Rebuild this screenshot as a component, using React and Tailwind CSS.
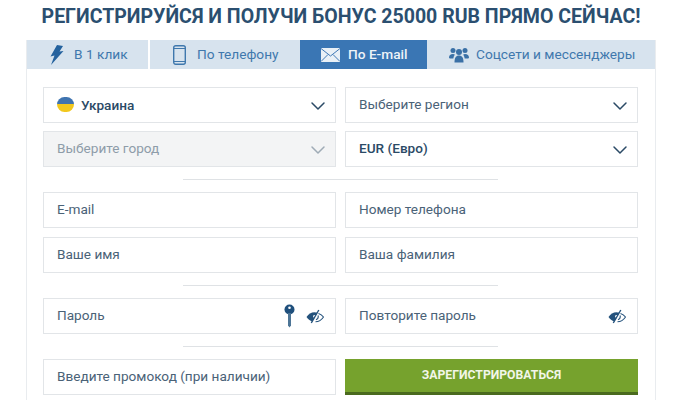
import React from "react";
import { ChevronDown } from "lucide-react";

const font = "font-['Roboto',sans-serif]";

function Chevron({ muted }) {
  return <ChevronDown className={muted ? "w-6 h-6 -mr-[5px] mt-[2px] text-[#9fabb6]" : "w-6 h-6 -mr-[5px] mt-[2px] text-[#2b4a66]"} strokeWidth={1.5} />;
}

function EyeOff() {
  return (
    <svg width="18" height="15" viewBox="0 0 18 15" className="block">
      <path d="M0.500 8C2.500 5 5.200 3.200 8.500 3.200c1 0 2 .2 2.900.5L6.200 12.600C3.900 11.800 2 10.200 0.500 8Z" fill="#24527c" />
      <circle cx="8.500" cy="7.500" r="1.400" fill="#fff" />
      <path d="M5.300 14 12.800 1" stroke="#24527c" strokeWidth="1.400" fill="none" />
      <path d="M12.500 4.500C14.500 5.200 16.200 6.400 17.500 8 15.500 11 12.800 12.800 9.500 12.800M12 6.500C12.700 8.500 11.800 10 10 10.800" stroke="#24527c" strokeWidth="1.100" fill="none" />
    </svg>
  );
}

function Key() {
  return (
    <svg width="11" height="24" viewBox="0 0 11 24" className="block">
      <circle cx="5.500" cy="5.500" r="5" fill="#1f4f7c" />
      <circle cx="5.500" cy="3.800" r="1.300" fill="#fff" />
      <path d="M4 9h3v12.500L5.500 23.500 4 21.500Z" fill="#4d7596" />
    </svg>
  );
}

function Bolt() {
  return (
    <svg width="15" height="20" viewBox="0 0 15 20" className="block">
      <path d="M8 0 14 1 10.500 6.500 14.500 6 2 20 5.500 10.500 1.500 11.500Z" fill="#24629e" />
    </svg>
  );
}

function Phone() {
  return (
    <svg width="13" height="20" viewBox="0 0 13 20" className="block" fill="none">
      <rect x="0.700" y="0.700" width="11.600" height="18.600" rx="2" stroke="#3f78ad" strokeWidth="1.400" />
      <path d="M1 3.500h11M1 16.500h11" stroke="#3f78ad" strokeWidth="1" />
    </svg>
  );
}

function Mail() {
  return (
    <svg width="19" height="14" viewBox="0 0 19 14" className="block" fill="none">
      <rect width="19" height="14" fill="#e9f0f6" />
      <path d="M0 0.500 9.500 8 19 0.500M0 13.500 7 6.500M19 13.500 12 6.500" stroke="#3f78b5" strokeWidth="1" />
    </svg>
  );
}

function Users() {
  return (
    <svg width="20" height="16" viewBox="0 0 20 16" className="block" fill="#3a70a6">
      <circle cx="4" cy="3.500" r="2.500" />
      <circle cx="16" cy="3.500" r="2.500" />
      <circle cx="10" cy="5" r="3" />
      <path d="M0 11c0-3 1.500-4 4-4 .8 0 1.400.2 1.800.5C5 8.700 4.500 10 4.300 11.500H1Z" />
      <path d="M20 11c0-3-1.500-4-4-4-.8 0-1.400.2-1.800.5.800 1.200 1.300 2.500 1.500 4H19Z" />
      <path d="M5.500 15.500c0-5 1.500-7 4.500-7s4.500 2 4.500 7Z" />
    </svg>
  );
}

function Flag() {
  return (
    <span className="block w-[17px] h-[15px] rounded-full overflow-hidden shrink-0">
      <span className="block h-1/2 bg-[#3f74b0]" />
      <span className="block h-1/2 bg-[#f2c81e]" />
    </span>
  );
}

function Tab({ children, className }) {
  return <div className={`h-[29px] flex items-center text-[13.700px] ${className}`}>{children}</div>;
}

function Field({ children, right, className = "", textClass = "text-[#4a6277]" }) {
  return (
    <div className={`h-9 border border-[#e2e5e8] flex items-center justify-between pl-[13px] pr-[10px] text-[13.600px] ${textClass} ${className}`}>
      <span className="flex items-center gap-[7px] -mt-px">{children}</span>
      {right}
    </div>
  );
}

function Divider() {
  return <div className="w-[315px] h-px bg-[#dfe2e5] mx-auto" />;
}

export default function App() {
  return (
    <div className={`w-[680px] h-[400px] overflow-hidden bg-white ${font}`}>
      <h1 className="h-10 flex items-center justify-center pl-[2px] text-[19.550px] font-bold text-[#2b4f70] whitespace-nowrap -mt-[3px] leading-none">
        РЕГИСТРИРУЙСЯ И ПОЛУЧИ БОНУС 25000 RUB ПРЯМО СЕЙЧАС!
      </h1>
      <div className="ml-[26px] mt-[3px] w-[630px] h-[400px] border-x border-[#e9ecef]">
        <div className="flex text-[#3f78ad]">
          <Tab className="w-[121px] bg-[#d7e3ee] pl-[22px] gap-[10px]"><Bolt /><span>В 1 клик</span></Tab>
          <Tab className="w-[150px] ml-[2px] bg-[#d7e3ee] pl-[23px] gap-[11px]"><Phone /><span>По телефону</span></Tab>
          <Tab className="w-[127px] bg-[#3a76b4] text-[#eef3f8] font-medium pl-[21px] gap-[8px]"><Mail /><span>По E-mail</span></Tab>
          <Tab className="w-[228px] bg-[#d7e3ee] pl-[22px] gap-[7px]"><Users /><span>Соцсети и мессенджеры</span></Tab>
        </div>
        <div className="pl-4 pr-[17px] pt-[18px]">
          <div className="grid grid-cols-2 gap-x-[9px] gap-y-2">
            <Field right={<Chevron />} textClass="text-[#2b4a66] font-medium"><Flag /><span className="mt-px">Украина</span></Field>
            <Field right={<Chevron />}>Выберите регион</Field>
            <Field right={<Chevron muted />} className="bg-[#f3f4f5]" textClass="text-[#8e9ca9]">Выберите город</Field>
            <Field right={<Chevron />} textClass="text-[#2b4a66] font-medium">EUR (Евро)</Field>
          </div>
          <div className="py-3"><Divider /></div>
          <div className="grid grid-cols-2 gap-x-[9px] gap-y-[9px]">
            <Field>E-mail</Field>
            <Field>Номер телефона</Field>
            <Field>Ваше имя</Field>
            <Field>Ваша фамилия</Field>
          </div>
          <div className="py-3"><Divider /></div>
          <div className="grid grid-cols-2 gap-x-[9px]">
            <Field right={<span className="flex items-center gap-[11px] pr-px"><Key /><EyeOff /></span>}>Пароль</Field>
            <Field right={<span className="pr-px"><EyeOff /></span>}>Повторите пароль</Field>
          </div>
          <div className="py-3"><Divider /></div>
          <div className="grid grid-cols-2 gap-x-[9px]">
            <Field>Введите промокод (при наличии)</Field>
            <button className="h-9 bg-[#76a22d] border-b-[3px] border-[#4a6a1e] text-[#f2f6e8] text-[12.200px] font-bold">ЗАРЕГИСТРИРОВАТЬСЯ</button>
          </div>
        </div>
      </div>
    </div>
  );
}
